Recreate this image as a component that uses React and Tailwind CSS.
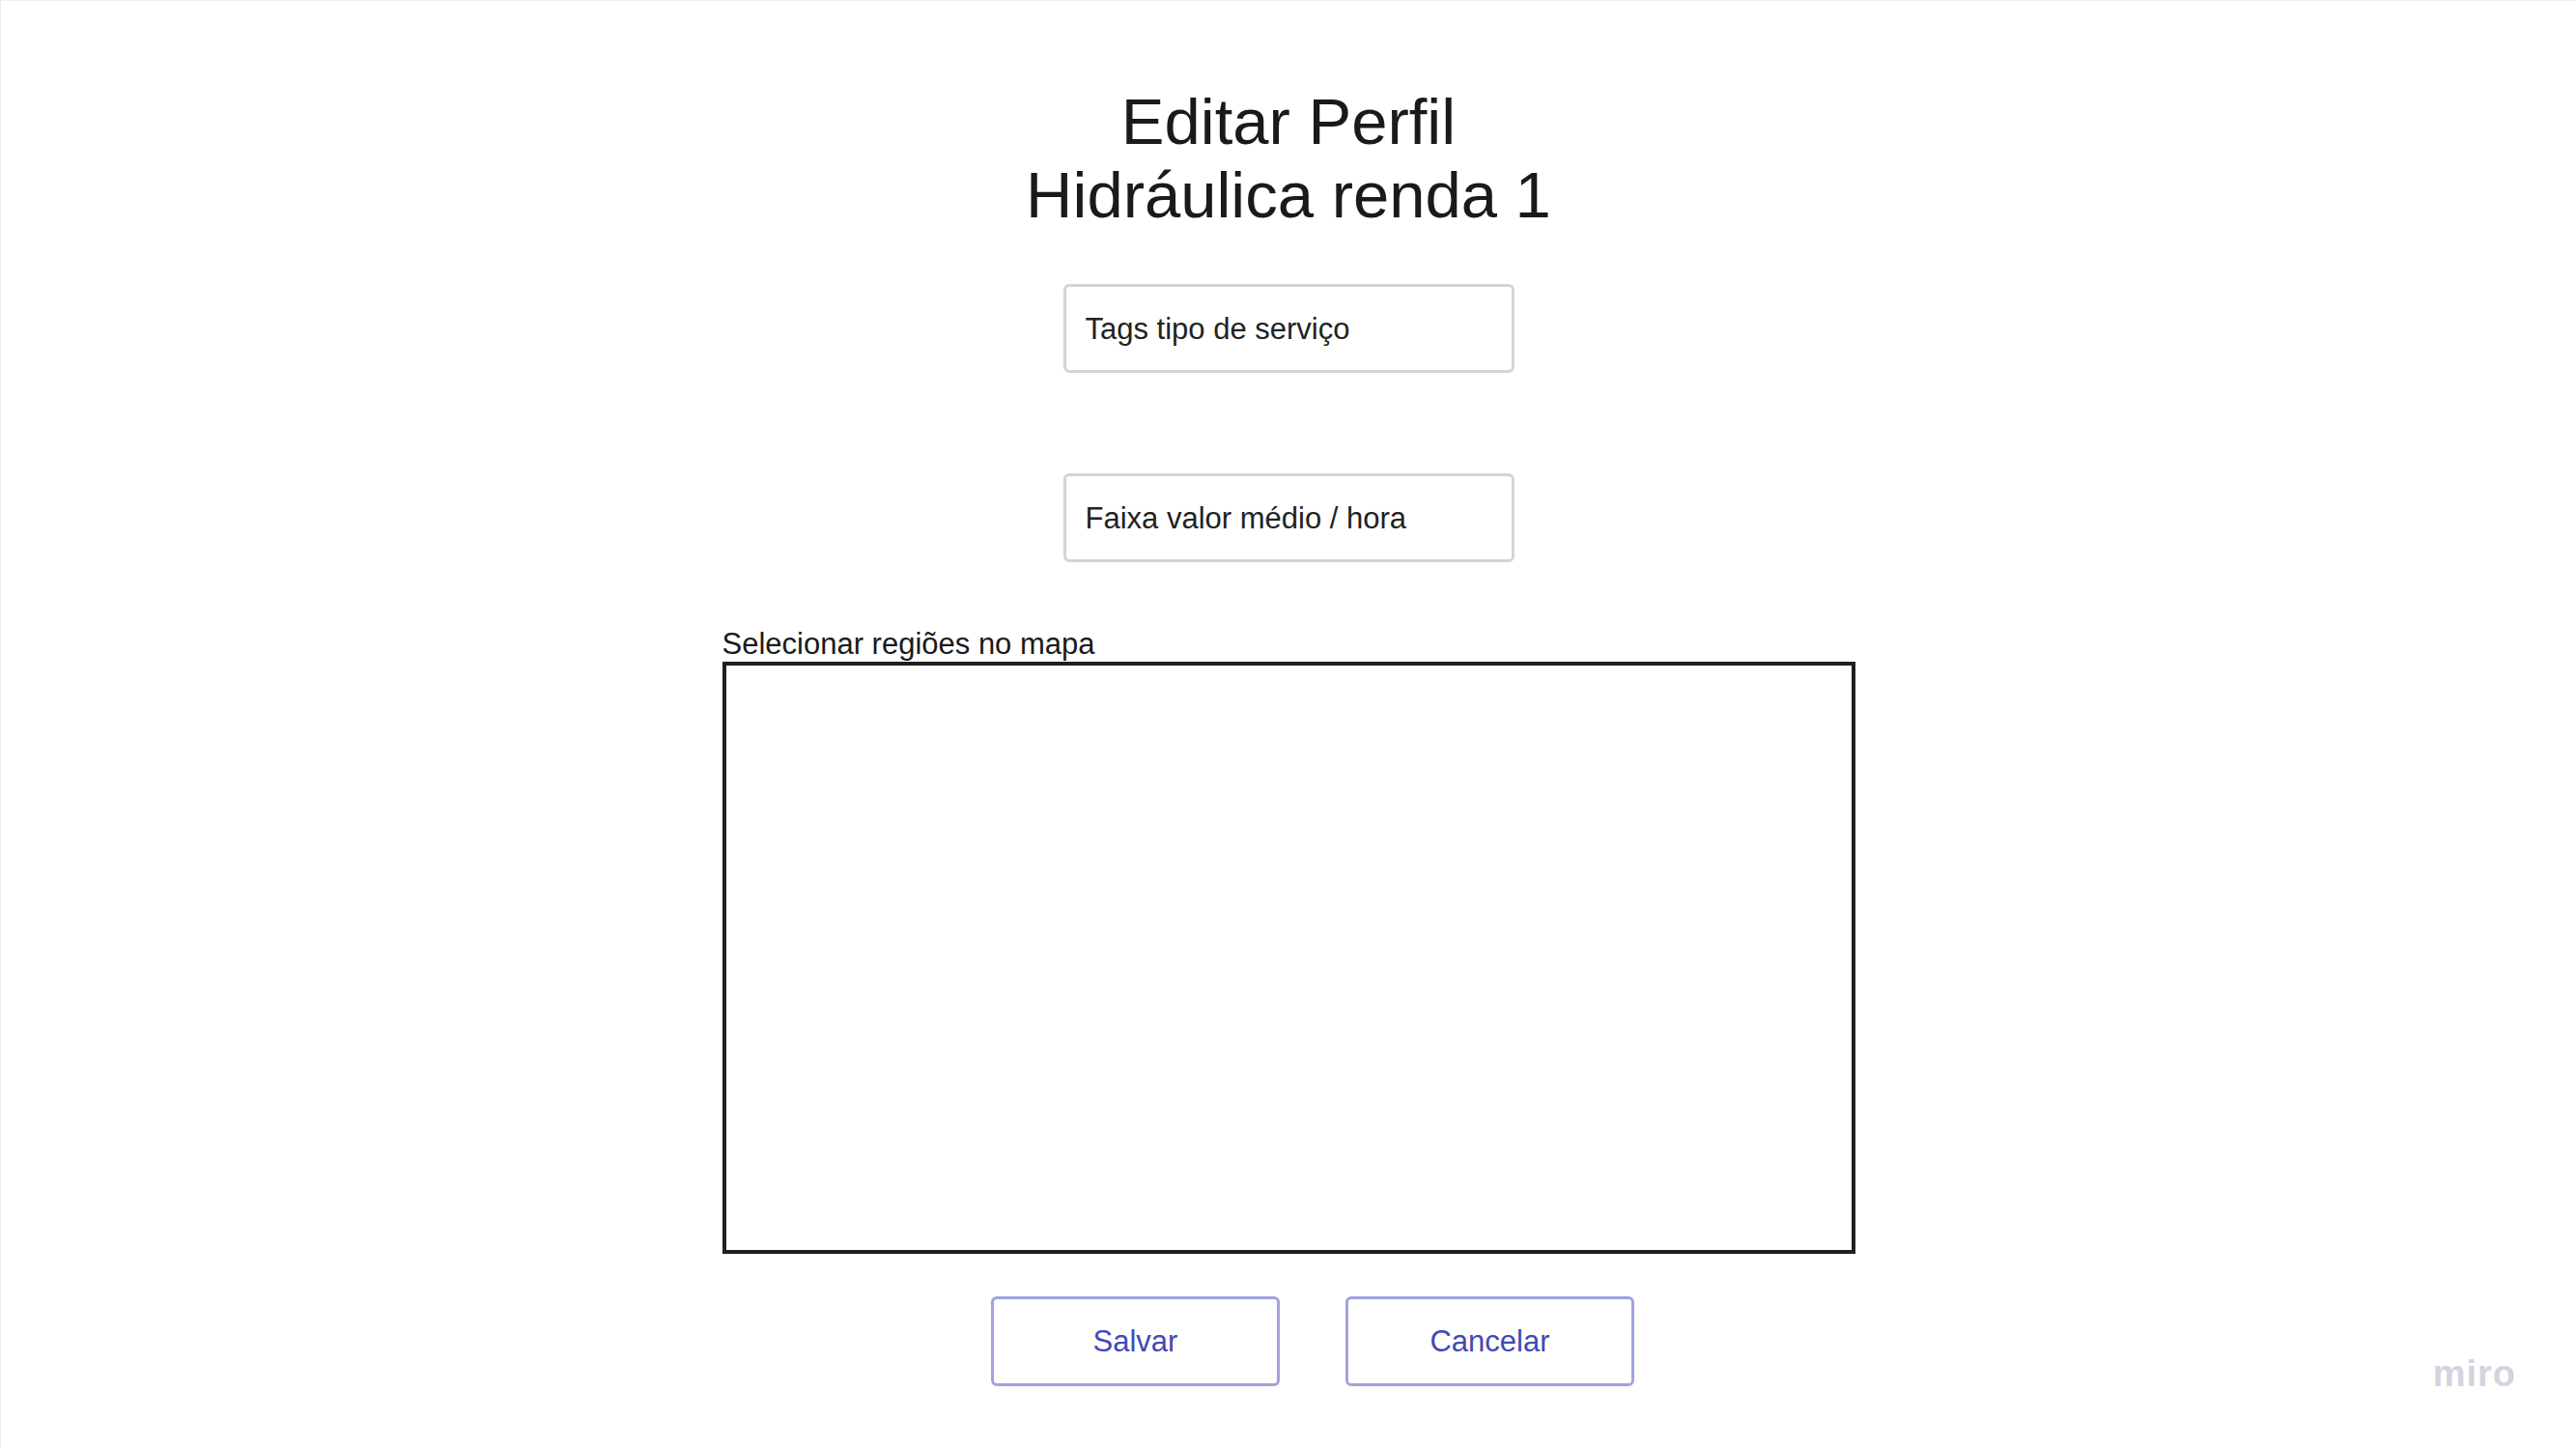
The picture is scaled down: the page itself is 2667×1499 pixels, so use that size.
import React from 'react';

// Editar Perfil - wireframe de edição do perfil do prestador
export default function App() {
  return (
    <div
      className="relative h-[1499px] w-full overflow-hidden bg-white border-t border-l border-[#eeeeee] text-[#1a1a1a]"
      style={{ fontFamily: '"Liberation Sans", Arial, sans-serif' }}
    >
      <div className="flex flex-col items-center pt-[87px]">
        {/* título */}
        <h1 className="text-center text-[67px] leading-[76px] font-normal">
          Editar Perfil
          <br />
          Hidráulica renda 1
        </h1>

        {/* campos */}
        <div className="mt-[54px] flex w-[467px] h-[92px] items-center rounded-[6px] border-[3px] border-[#d4d4d4] px-[20px] pt-[2px] text-[31px] text-[#222222]">
          Tags tipo de serviço
        </div>
        <div className="mt-[104px] flex w-[467px] h-[92px] items-center rounded-[6px] border-[3px] border-[#d4d4d4] px-[20px] pt-[2px] text-[31px] text-[#222222]">
          Faixa valor médio / hora
        </div>

        {/* mapa */}
        <div className="mt-[67px] w-[1173px]">
          <div className="text-[31px] leading-[36px] text-[#1a1a1a]">Selecionar regiões no mapa</div>
          <div className="h-[613px] w-full border-[4px] border-[#1f1f1f]"></div>
        </div>

        {/* botões */}
        <div className="mt-[44px] flex gap-[68px] pl-[50px]">
          <button className="flex h-[93px] w-[299px] items-center justify-center rounded-[6px] border-[3px] border-[#a0a3dd] pt-[2px] text-[31px] text-[#4148b5]">
            Salvar
          </button>
          <button className="flex h-[93px] w-[299px] items-center justify-center rounded-[6px] border-[3px] border-[#a0a3dd] pt-[2px] text-[31px] text-[#4148b5]">
            Cancelar
          </button>
        </div>
      </div>

      {/* marca d'água */}
      <div className="absolute right-[62px] bottom-[58px] text-[38px] font-semibold leading-none tracking-[1px] text-[#d3d4de]">
        miro
      </div>
    </div>
  );
}
